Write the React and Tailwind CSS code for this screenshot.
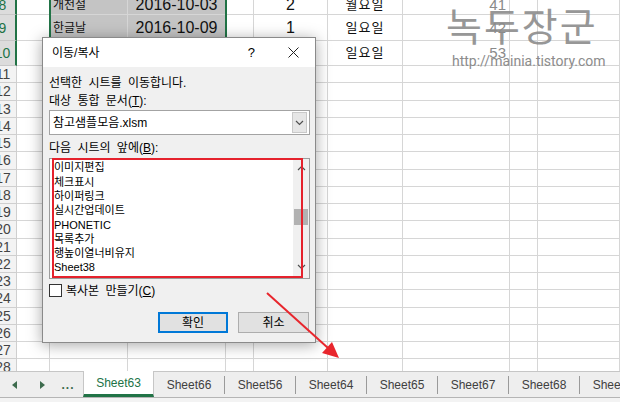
import React from "react";

const COLS = [
  { k: "A" },
  { k: "B", al: "justify-start pl-[3px] text-[12px]" },
  { k: "C", al: "justify-center text-[16px]" },
  { k: "D" },
  { k: "E", al: "justify-center text-[16px]" },
  { k: "F", al: "justify-center text-[13px] tracking-[1px]" },
  { k: "G", al: "justify-end pr-[3px] text-[15px] text-[#8a8a8a]" },
  { k: "H" },
  { k: "I" },
];

const ROWS = [
  { n: 8, pb: "pb-[1px]", sel: true, v: { B: "개천절", C: "2016-10-03", E: "2", F: "월요일", G: "41" } },
  { n: 9, pb: "pb-[4px]", sel: true, v: { B: "한글날", C: "2016-10-09", E: "1", F: "일요일", G: "42" } },
  { n: 10, pb: "pb-[4px]", sel: true, v: { B: "크리스마스", C: "2016-12-25", E: "1", F: "일요일", G: "53" } },
  ...Array.from({ length: 18 }, (_, i) => ({ n: 11 + i, pb: "", sel: false, v: {} })),
];

const SHEETS = ["Sheet66", "Sheet56", "Sheet64", "Sheet65", "Sheet67", "Sheet68", "Sheet69"];

const ITEMS = [
  ["이미지편집", "h-[15px]"],
  ["체크표시", "h-[15px]"],
  ["하이퍼링크", "h-[14px]"],
  ["실시간업데이트", "h-[14px]"],
  ["PHONETIC", "h-[15px]"],
  ["목록추가", "h-[14px]"],
  ["행높이열너비유지", "h-[14px]"],
  ["Sheet38", "h-[14px]"],
];

function Chevron({ up }) {
  return (
    <svg width="9" height="6" viewBox="0 0 9 6">
      <path d={up ? "M1 5L4.5 1.5L8 5" : "M1 1L4.5 4.5L8 1"} fill="none" stroke="#505050" strokeWidth="1.2" />
    </svg>
  );
}

function Sheet() {
  return (
    <div className="relative h-[371px] shrink-0 overflow-hidden">
      <div className="ml-[-12px] grid grid-cols-[29px_33px_78px_98px_28px_74px_75px_107px_28px_82px] grid-rows-[15px_26px_25px_repeat(18,17.25px)]">
        {ROWS.map((r) => (
          <React.Fragment key={r.n}>
            <div
              className={
                r.sel
                  ? `flex items-end justify-center pl-[2px] ${r.pb} bg-[#dcdcdc] border-b border-[#c8c8c8] border-r-2 border-r-[#217346] text-[14px] leading-[16px] text-[#217346]`
                  : "flex items-center justify-center pl-[2px] bg-[#f3f3f3] border-b border-r border-[#cfcfcf] text-[14px] leading-[16px] text-[#444]"
              }
            >
              {r.n}
            </div>
            {COLS.map((c) => {
              const hi = r.sel && (c.k === "B" || c.k === "C");
              return (
                <div
                  key={c.k}
                  className={`flex ${r.sel ? "items-end " + r.pb : "items-center"} ${c.al || ""} leading-[16px] border-r border-b border-[#d6d6d6] ${hi ? "bg-[#c4c4c4]" : "bg-white"} whitespace-nowrap overflow-hidden`}
                >
                  {r.v[c.k]}
                </div>
              );
            })}
          </React.Fragment>
        ))}
      </div>
      <div className="absolute left-[49px] top-[-4px] w-[178px] h-[71px] border-2 border-[#217346]" />
      <div className="absolute left-[446px] top-[1px] text-[39px] leading-[46px] text-[#8c8c8c] opacity-90 font-['Noto_Sans_CJK_KR',sans-serif] tracking-[2px]">
        녹두장군
      </div>
      <div className="absolute left-[452px] top-[53px] text-[14px] leading-[16px] text-[#8c8c8c] font-['Roboto',sans-serif]">
        http://mainia.tistory.com
      </div>
    </div>
  );
}

function TabBar() {
  return (
    <div className="flex h-[26px] shrink-0 bg-[#eeeeee] text-[12px] text-[#404040]">
      <div className="w-[83px] shrink-0 flex items-center border-t border-[#c6c6c6]">
        <div className="w-[28px] flex justify-center">
          <svg width="5" height="8" viewBox="0 0 5 8"><path d="M5 0L0 4L5 8Z" fill="#3d6b4d" /></svg>
        </div>
        <div className="w-[28px] flex justify-center">
          <svg width="5" height="8" viewBox="0 0 5 8"><path d="M0 0L5 4L0 8Z" fill="#3d6b4d" /></svg>
        </div>
        <div className="w-[24px] flex justify-center text-[#3d6b4d] font-bold tracking-[1px] leading-none">...</div>
      </div>
      <div className="w-[71px] shrink-0 flex items-center justify-center bg-white border-l border-r border-[#c6c6c6] border-b-[3px] border-b-[#217346] text-[#217346]">
        Sheet63
      </div>
      {SHEETS.map((s) => (
        <div key={s} className="w-[71px] shrink-0 flex items-center border-t border-[#c6c6c6]">
          <span className="flex-1 text-center">{s}</span>
          <span className="w-px h-[18px] bg-[#9a9a9a]" />
        </div>
      ))}
    </div>
  );
}

function Dialog() {
  return (
    <div className="absolute left-[42px] top-[37px] w-[274px] h-[306px] border border-[#8a8a8a] bg-[#f0f0f0] shadow-[0_2px_14px_rgba(0,0,0,0.35)] flex flex-col text-[12px] leading-[16px] text-black">
      <div className="h-[29px] shrink-0 bg-white flex items-center pl-[9px] pr-[16px]">
        <span className="flex-1">이동/복사</span>
        <span className="text-[13px]">?</span>
        <svg className="ml-[33px]" width="11" height="11" viewBox="0 0 11 11">
          <path d="M0.5 0.5L10.5 10.5M10.5 0.5L0.5 10.5" stroke="#222" strokeWidth="1" />
        </svg>
      </div>
      <div className="flex-1 flex flex-col pl-[6px] pr-[5px] pt-[8px] [word-spacing:3px]">
        <div className="h-[16px] shrink-0 flex items-center">선택한 시트를 이동합니다.</div>
        <div className="h-[16px] shrink-0 mt-[2px] flex items-center">
          대상 통합 문서(<span className="underline">T</span>):
        </div>
        <div className="relative shrink-0 mt-[1px] h-[25px] border border-[#a3a3a3] bg-white flex items-center pl-[3px] [word-spacing:0]">
          참고샘플모음.xlsm
          <div className="absolute right-[2px] top-[1px] bottom-[1px] w-[15px] bg-[#e6e6e6] border border-[#c9c9c9] flex items-center justify-center">
            <Chevron />
          </div>
        </div>
        <div className="h-[16px] shrink-0 mt-[5px] flex items-center">
          다음 시트의 앞에(<span className="underline">B</span>):
        </div>
        <div className="mt-[2px] h-[121px] shrink-0 border border-[#9c9c9c] bg-white flex">
          <div className="flex-1 flex flex-col pl-[4px] text-[11px] [word-spacing:0]">
            {ITEMS.map(([t, h]) => (
              <div key={t} className={`${h} shrink-0 flex items-center`}>{t}</div>
            ))}
          </div>
          <div className="w-[16px] bg-[#f0f0f0] flex flex-col items-center">
            <div className="h-[17px] flex items-center"><Chevron up /></div>
            <div className="h-[33px]" />
            <div className="h-[16px] w-[14px] bg-[#b2b2b2]" />
            <div className="flex-1" />
            <div className="h-[22px] flex items-center"><Chevron /></div>
          </div>
        </div>
        <div className="mt-[5px] h-[13px] shrink-0 flex items-center">
          <span className="w-[13px] h-[13px] border border-[#333] bg-white" />
          <span className="ml-[4px]">
            복사본 만들기(<span className="underline">C</span>)
          </span>
        </div>
        <div className="mt-[15px] shrink-0 flex justify-end gap-[10px] pr-[1px]">
          <button className="w-[70px] h-[21px] bg-[#e1e1e1] border border-[#0078d7] shadow-[inset_0_0_0_1px_#0078d7] text-[12px] leading-[16px]">확인</button>
          <button className="w-[71px] h-[21px] bg-[#e1e1e1] border border-[#adadad] text-[12px] leading-[16px]">취소</button>
        </div>
      </div>
      <div className="absolute left-[9px] top-[120px] w-[251px] h-[120px] border-2 border-[#e5222d]" />
    </div>
  );
}

export default function App() {
  return (
    <div className="relative w-[620px] h-[402px] overflow-hidden bg-white font-['Liberation_Sans','Noto_Sans_CJK_KR',sans-serif] text-[#111]">
      <div className="flex flex-col h-full">
        <Sheet />
        <TabBar />
        <div className="flex-1 border-t border-[#b5b5b5] bg-[#f3f3f3]" />
      </div>
      <Dialog />
      <svg className="absolute inset-0 pointer-events-none" width="620" height="402">
        <line x1="267" y1="293" x2="328" y2="348" stroke="#e8262d" strokeWidth="2" />
        <polygon points="339,358 322,353 332,342" fill="#e8262d" />
      </svg>
    </div>
  );
}
